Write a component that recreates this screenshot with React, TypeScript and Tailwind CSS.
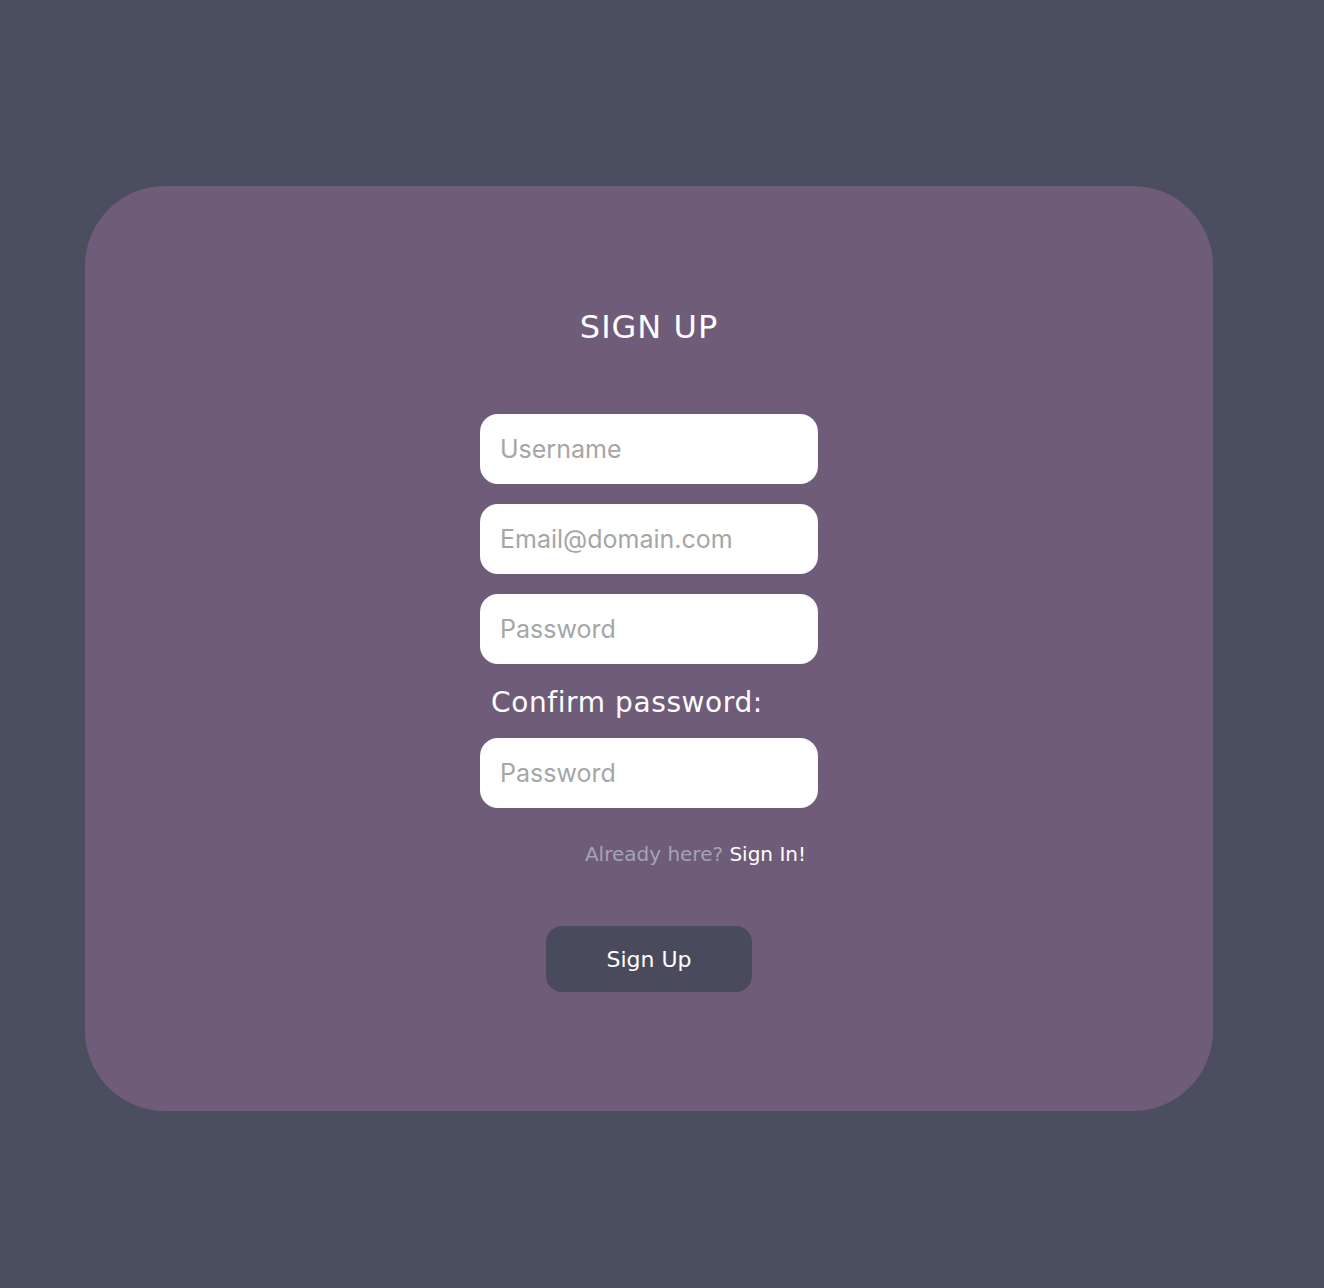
export default function App() {
  const inputCls =
    "block w-[338px] h-[70px] rounded-[18px] bg-white px-5 text-[25px] text-gray-800 outline-none placeholder:text-[#a6a6a6] [font-family:Inter,'Liberation_Sans',Arial,sans-serif]";
  return (
    <div className="min-h-[1288px] w-full bg-[#4a4e5f] pt-[186px] [font-family:'DejaVu_Sans',Verdana,sans-serif]">
      <div className="ml-[85px] flex h-[925px] w-[1128px] flex-col items-center rounded-[80px] bg-[#6f5c78] pt-[121px]">
        <h1 className="text-[32px] leading-[40px] tracking-[1px] text-white">SIGN UP</h1>
        <div className="mt-[67px] flex flex-col">
          <input className={inputCls} placeholder="Username" />
          <input className={inputCls + " mt-5"} placeholder="Email@domain.com" />
          <input className={inputCls + " mt-5"} type="password" placeholder="Password" />
          <label className="mt-[22px] pl-[11px] text-[28px] leading-[34px] tracking-[0.6px] text-white">Confirm password:</label>
          <input className={inputCls + " mt-[18px]"} type="password" placeholder="Password" />
          <p className="mt-[34px] pr-3 text-right text-[20px] leading-[24px] text-[#a3a3b8]">
            Already here? <a className="text-white">Sign In!</a>
          </p>
        </div>
        <button className="mt-[60px] h-[66px] w-[206px] rounded-[16px] bg-[#4a4a5d] text-[22px] text-white">
          Sign Up
        </button>
      </div>
    </div>
  );
}
